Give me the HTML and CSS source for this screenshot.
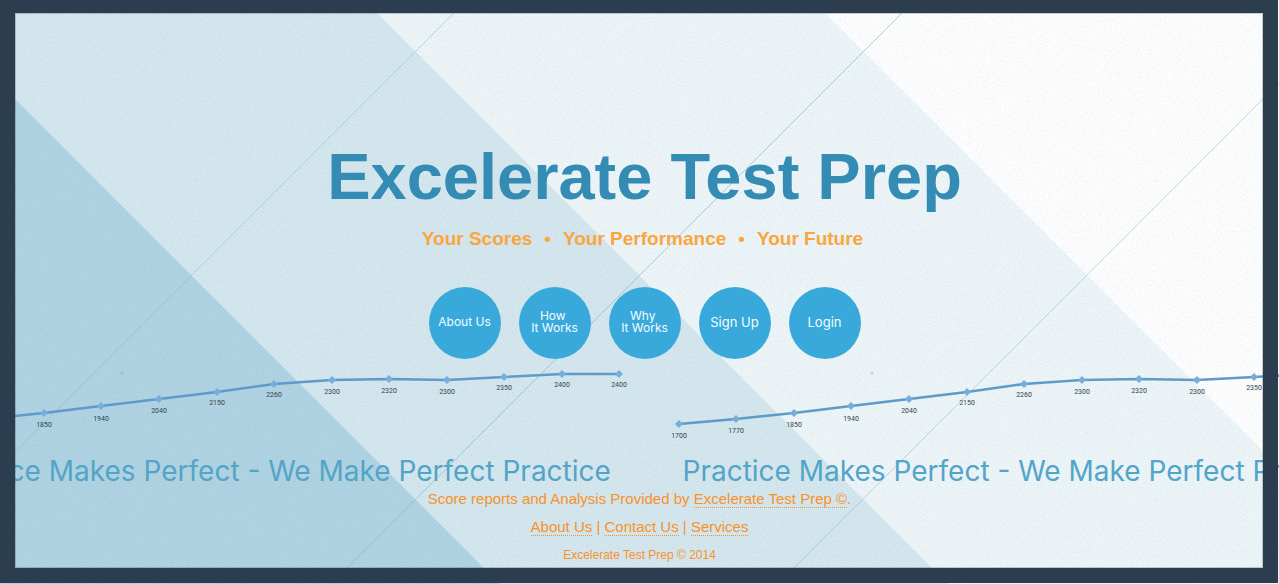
FILE: index.html
```html
<!DOCTYPE html>
<html lang="en">
<head>
<meta charset="utf-8">
<title>Excelerate Test Prep</title>
<link rel="stylesheet" href="styles.css">
</head>
<body>
<div class="page">
  <svg class="backdrop" viewBox="0 0 1279 584" preserveAspectRatio="xMidYMid slice" aria-hidden="true">
    <defs>
      <filter id="grain" x="0" y="0" width="100%" height="100%" color-interpolation-filters="sRGB">
        <feTurbulence type="fractalNoise" baseFrequency="0.8" numOctaves="2" seed="4"/>
        <feColorMatrix values="0 0 0 0 0.4  0 0 0 0 0.5  0 0 0 0 0.55  0.22 0 0 0 -0.08"/>
      </filter>
    </defs>
    <rect width="1279" height="584" fill="#ffffff"/>
    <path d="M0 0H812L1279 467V584H0Z" fill="#eef6f9"/>
    <path d="M0 0H364L948 584H0Z" fill="#d5e8ef"/>
    <path d="M0 84L500 584H0Z" fill="#b0d4e3"/>
    <g stroke="#86b8cf" stroke-width="1" fill="none">
      <path d="M467 0L0 467" stroke-opacity=".5"/>
      <path d="M915 0L331 584" stroke-opacity=".65"/>
      <path d="M1279 83L778 584" stroke-opacity=".5"/>
    </g>
    <rect width="1279" height="584" filter="url(#grain)"/>
  </svg>

  <main class="hero">
    <h1 class="title">Excelerate Test Prep</h1>
    <p class="tagline"><span>Your Scores</span><span>•</span><span>Your Performance</span><span>•</span><span>Your Future</span></p>
    <nav class="menu" aria-label="Main">
      <a class="bubble" href="#about">About Us</a>
      <a class="bubble" href="#how">How&nbsp;<br>It Works</a>
      <a class="bubble" href="#why">Why&nbsp;<br>It Works</a>
      <a class="bubble bubble-large" href="#signup">Sign Up</a>
      <a class="bubble bubble-large" href="#login">Login</a>
    </nav>
  </main>

  <div class="strip">
    <section class="slide">
      <svg class="chart" viewBox="1 0 750 76" role="img" aria-label="Scores rising from 1700 to 2400">
        <defs>
          <g id="scores">
            <polyline class="trend" points="40,59 97,54 155,48 212,41 270,34 328,27 385,19 443,15 500,14 558,15 615,12 673,9 730,9"/>
            <g class="points">
              <path id="pt" d="M40 55l4 4-4 4-4-4Z"/>
              <use href="#pt" x="57" y="-5"/><use href="#pt" x="115" y="-11"/><use href="#pt" x="172" y="-18"/>
              <use href="#pt" x="230" y="-25"/><use href="#pt" x="288" y="-32"/><use href="#pt" x="345" y="-40"/>
              <use href="#pt" x="403" y="-44"/><use href="#pt" x="460" y="-45"/><use href="#pt" x="518" y="-44"/>
              <use href="#pt" x="575" y="-47"/><use href="#pt" x="633" y="-50"/><use href="#pt" x="690" y="-50"/>
            </g>
            <circle cx="233" cy="8" r="1.5" fill="#8aa5bd" fill-opacity=".4"/>
          </g>
        </defs>
        <use href="#scores"/>
        <g class="labels">
          <text x="40" y="73">1700</text><text x="97" y="68">1770</text><text x="155" y="62">1850</text><text x="212" y="56">1940</text><text x="270" y="48">2040</text><text x="328" y="40">2150</text><text x="385" y="32">2260</text><text x="443" y="29">2300</text><text x="500" y="28">2320</text><text x="558" y="29">2300</text><text x="615" y="25">2350</text><text x="673" y="22">2400</text><text x="730" y="22">2400</text>
        </g>
      </svg>
      <p class="slogan">Practice Makes Perfect - We Make Perfect Practice</p>
    </section>
    <section class="slide">
      <svg class="chart" viewBox="1 0 750 76" role="img" aria-label="Scores rising from 1700 to 2400">
        <use href="#scores"/>
        <g class="labels">
          <text x="40" y="73">1700</text><text x="97" y="68">1770</text><text x="155" y="62">1850</text><text x="212" y="56">1940</text><text x="270" y="48">2040</text><text x="328" y="40">2150</text><text x="385" y="32">2260</text><text x="443" y="29">2300</text><text x="500" y="28">2320</text><text x="558" y="29">2300</text><text x="615" y="25">2350</text><text x="673" y="22">2400</text><text x="730" y="22">2400</text>
        </g>
      </svg>
      <p class="slogan">Practice Makes Perfect - We Make Perfect Practice</p>
    </section>
  </div>

  <footer class="footer">
    <p>Score reports and Analysis Provided by <a href="#home">Excelerate Test Prep ©</a>.</p>
    <p><a href="#about">About Us</a> | <a href="#contact">Contact Us</a> | <a href="#services">Services</a></p>
    <p class="copyright">Excelerate Test Prep © 2014</p>
  </footer>
  <div class="frame"></div>
</div>
</body>
</html>
```
FILE: styles.css
```css
* { box-sizing: border-box; }

body {
  margin: 0;
  font-family: "Liberation Sans", Arial, sans-serif;
}

p, h1 { margin: 0; }

.page {
  position: relative;
  min-height: 100vh;
  overflow: hidden;
  isolation: isolate;
}

.backdrop {
  position: absolute;
  inset: 0;
  width: 100%;
  height: 100%;
  z-index: -1;
}

.frame {
  position: absolute;
  inset: 0 1px 1px 0;
  border: 15px solid #2b3d4f;
  border-top-width: 13px;
  box-shadow: inset 0 0 0 1px rgba(43, 61, 79, 0.25);
  pointer-events: none;
}

.hero {
  display: flex;
  flex-direction: column;
  align-items: center;
  padding: 137px 0 0 10px;
}

.title {
  font-size: 65px;
  line-height: 80px;
  color: #348cb4;
}

.tagline {
  display: flex;
  gap: 12px;
  margin-top: 10px;
  padding-right: 4px;
  font-size: 19px;
  font-weight: bold;
  line-height: 24px;
  color: #fba53c;
}

.menu {
  display: flex;
  gap: 18px;
  margin-top: 36px;
}

.bubble {
  display: flex;
  align-items: center;
  justify-content: center;
  width: 72px;
  height: 72px;
  padding-bottom: 3px;
  border-radius: 50%;
  background: #39a9db;
  color: #f4fbff;
  font-family: Inter, sans-serif;
  font-size: 12px;
  line-height: 12px;
  text-align: center;
  text-decoration: none;
}

.bubble-large { font-size: 13px; }

.strip {
  display: flex;
  justify-content: center;
  margin-top: 6px;
}

.slide {
  flex: none;
  width: 750px;
}

.chart {
  display: block;
  width: 100%;
}

.trend {
  fill: none;
  stroke: #5f9acb;
  stroke-width: 2.5;
}

.points { fill: #76addd; }

.labels {
  fill: #33434d;
  font-family: Roboto, sans-serif;
  font-size: 7px;
  text-anchor: middle;
}

.slogan {
  margin-top: 12px;
  padding-left: 43px;
  font-family: Inter, sans-serif;
  font-size: 28px;
  line-height: 36px;
  white-space: nowrap;
  color: #52a4c8;
}

.footer {
  display: flex;
  flex-direction: column;
  gap: 8px;
  font-size: 15px;
  line-height: 20px;
  text-align: center;
  color: #fa9128;
}

.footer a {
  color: inherit;
  text-decoration: none;
  border-bottom: 1px dotted;
}

.copyright { font-size: 12px; }
```
